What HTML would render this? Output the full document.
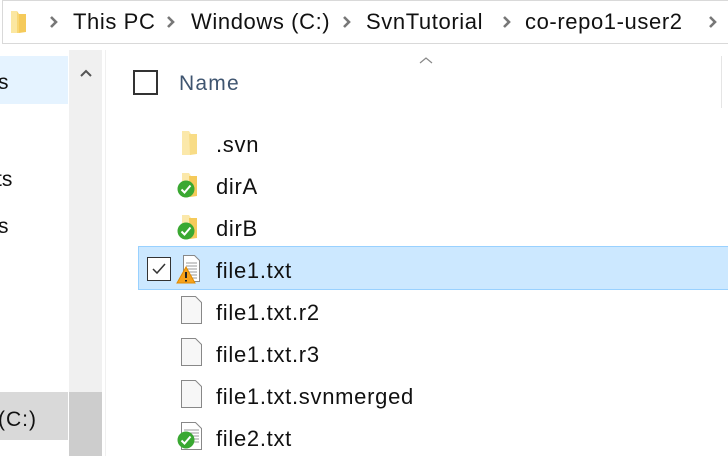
<!DOCTYPE html>
<html><head><style>
*{margin:0;padding:0;box-sizing:border-box}
body{width:728px;height:456px;overflow:hidden;background:#fff;font-family:"Liberation Sans",sans-serif;position:relative;color:#000}
.abs{position:absolute}
.addr{left:2px;top:0;width:740px;height:44px;border:1px solid #d9d9d9}
.crumb{position:absolute;top:9px;font-size:22px;color:#111;white-space:nowrap;letter-spacing:0.6px}
.chev{position:absolute;top:15px;width:9px;height:14px}
.row{position:absolute;left:216px;font-size:22px;color:#111;white-space:nowrap;letter-spacing:0.7px}
.nav{position:absolute;font-size:21px;color:#111}
</style></head><body>
<div class="abs addr"></div>
<svg class="abs" style="left:9px;top:9px" width="20" height="26"><path d="M2 2h6l2 3v19H2z" fill="#f8d775"/><path d="M8 5h9v18l-7 1V5z" fill="#f5ca5a"/><path d="M2 2h6v22H2z" fill="#fbe7a1"/></svg>
<svg class="chev" style="left:49px" viewBox="0 0 9 14"><path d="M2 2l5 5-5 5" stroke="#777" stroke-width="2.6" fill="none"/></svg>
<div class="crumb" style="left:73px">This PC</div>
<svg class="chev" style="left:166px" viewBox="0 0 9 14"><path d="M2 2l5 5-5 5" stroke="#777" stroke-width="2.6" fill="none"/></svg>
<div class="crumb" style="left:191px">Windows (C:)</div>
<svg class="chev" style="left:342px" viewBox="0 0 9 14"><path d="M2 2l5 5-5 5" stroke="#777" stroke-width="2.6" fill="none"/></svg>
<div class="crumb" style="left:366px">SvnTutorial</div>
<svg class="chev" style="left:502px" viewBox="0 0 9 14"><path d="M2 2l5 5-5 5" stroke="#777" stroke-width="2.6" fill="none"/></svg>
<div class="crumb" style="left:525px">co-repo1-user2</div>
<svg class="chev" style="left:708px" viewBox="0 0 9 14"><path d="M2 2l5 5-5 5" stroke="#777" stroke-width="2.6" fill="none"/></svg>

<div class="abs" style="left:0;top:56px;width:68px;height:48px;background:#e5f3ff"></div>
<div class="nav" style="left:-2px;top:71px">s</div>
<div class="nav" style="left:-4px;top:168px">ts</div>
<div class="nav" style="left:-2px;top:215px">s</div>
<div class="abs" style="left:0;top:392px;width:68px;height:48px;background:#d9d9d9"></div>
<div class="nav" style="left:-2px;top:408px;letter-spacing:1px">(C:)</div>
<div class="abs" style="left:69px;top:50px;width:33px;height:406px;background:#f0f0f0"></div>
<div class="abs" style="left:69px;top:392px;width:33px;height:64px;background:#cdcdcd"></div>
<svg class="abs" style="left:79px;top:68px" width="14" height="10"><path d="M2 8l5-5 5 5" stroke="#555" stroke-width="2" fill="none"/></svg>
<div class="abs" style="left:105px;top:50px;width:1px;height:406px;background:#f0f0f0"></div>

<div class="abs" style="left:133px;top:70px;width:25px;height:25px;border:2px solid #333"></div>
<div class="abs" style="left:179px;top:72px;font-size:21px;color:#3f5570;letter-spacing:1.2px">Name</div>
<svg class="abs" style="left:419px;top:56px" width="14" height="9"><path d="M1 7l6-5 6 5" stroke="#888" stroke-width="1.2" fill="none"/></svg>
<div class="abs" style="left:721px;top:56px;width:1px;height:52px;background:#e5e5e5"></div>

<div class="abs" style="left:138px;top:246px;width:600px;height:44px;background:#cce8ff;border:1px solid #99d1ff"></div>
<div class="abs" style="left:147px;top:257px;width:24px;height:24px;border:1.5px solid #333;background:#fff"></div>
<svg class="abs" style="left:149px;top:259px" width="20" height="20"><path d="M4 10l4 4 8-9" stroke="#333" stroke-width="1.5" fill="none"/></svg>

<svg class="abs" style="left:180px;top:129px" width="20" height="28"><path d="M2 2h7l2 3v21H2z" fill="#fbe8aa"/><path d="M9 5h8v20l-7 1z" fill="#f8dc86"/></svg>
<svg class="abs" style="left:176px;top:171px" width="28" height="28"><path d="M6 2h7l2 3v21H6z" fill="#fbe8aa"/><path d="M13 5h8v20l-7 1z" fill="#f5ca5a"/><circle cx="10" cy="18" r="8.5" fill="#3aa832"/><path d="M5.5 18.5l3 3 6-7" stroke="#fff" stroke-width="2" fill="none"/></svg>
<svg class="abs" style="left:176px;top:213px" width="28" height="28"><path d="M6 2h7l2 3v21H6z" fill="#fbe8aa"/><path d="M13 5h8v20l-7 1z" fill="#f5ca5a"/><circle cx="10" cy="18" r="8.5" fill="#3aa832"/><path d="M5.5 18.5l3 3 6-7" stroke="#fff" stroke-width="2" fill="none"/></svg>
<svg class="abs" style="left:176px;top:253px" width="30" height="32"><path d="M7.5 2.5h11l5 5v21h-16z" fill="#fff" stroke="#888"/><g stroke="#999"><path d="M10 10h11M10 13h11M10 16h11M10 19h11M10 22h11M10 25h11"/></g><path d="M10 14l9 16H1z" fill="#f7a21b" stroke="#e08a00"/><path d="M10 19v6M10 27v1.5" stroke="#222" stroke-width="2"/></svg>
<svg class="abs" style="left:180px;top:295px" width="24" height="30"><path d="M1.5 1.5h14l6 6v21h-20z" fill="#f7f7f7" stroke="#888"/></svg>
<svg class="abs" style="left:180px;top:337px" width="24" height="30"><path d="M1.5 1.5h14l6 6v21h-20z" fill="#f7f7f7" stroke="#888"/></svg>
<svg class="abs" style="left:180px;top:379px" width="24" height="30"><path d="M1.5 1.5h14l6 6v21h-20z" fill="#f7f7f7" stroke="#888"/></svg>
<svg class="abs" style="left:175px;top:421px" width="30" height="32"><path d="M6.5 1.5h14l6 6v21h-20z" fill="#fff" stroke="#888"/><g stroke="#999"><path d="M9 9h15M9 12h15M9 15h15M9 18h15M9 21h15"/></g><circle cx="11" cy="19" r="8.5" fill="#3aa832"/><path d="M6.5 19.5l3 3 6-7" stroke="#fff" stroke-width="2" fill="none"/></svg>

<div class="row" style="top:132px">.svn</div>
<div class="row" style="top:174px">dirA</div>
<div class="row" style="top:216px">dirB</div>
<div class="row" style="top:258px">file1.txt</div>
<div class="row" style="top:300px">file1.txt.r2</div>
<div class="row" style="top:342px">file1.txt.r3</div>
<div class="row" style="top:384px">file1.txt.svnmerged</div>
<div class="row" style="top:426px">file2.txt</div>
</body></html>
